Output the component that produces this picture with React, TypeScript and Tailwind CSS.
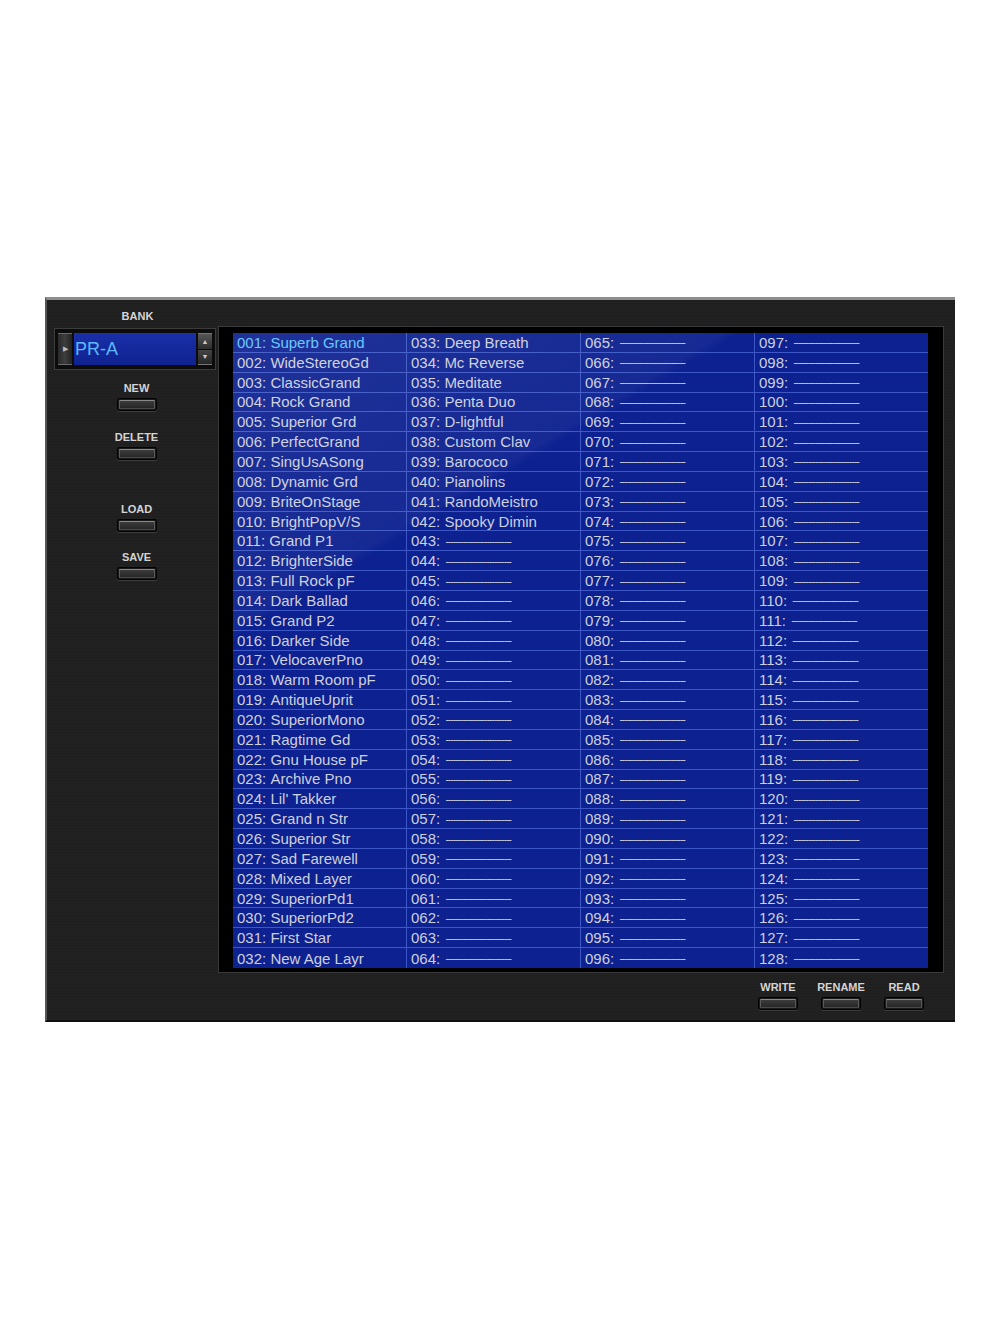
import React from "react";

const names: string[] = [
  "Superb Grand",
  "WideStereoGd",
  "ClassicGrand",
  "Rock Grand",
  "Superior Grd",
  "PerfectGrand",
  "SingUsASong",
  "Dynamic Grd",
  "BriteOnStage",
  "BrightPopV/S",
  "Grand P1",
  "BrighterSide",
  "Full Rock pF",
  "Dark Ballad",
  "Grand P2",
  "Darker Side",
  "VelocaverPno",
  "Warm Room pF",
  "AntiqueUprit",
  "SuperiorMono",
  "Ragtime Gd",
  "Gnu House pF",
  "Archive Pno",
  "Lil' Takker",
  "Grand n Str",
  "Superior Str",
  "Sad Farewell",
  "Mixed Layer",
  "SuperiorPd1",
  "SuperiorPd2",
  "First Star",
  "New Age Layr",
  "Deep Breath",
  "Mc Reverse",
  "Meditate",
  "Penta Duo",
  "D-lightful",
  "Custom Clav",
  "Barococo",
  "Pianolins",
  "RandoMeistro",
  "Spooky Dimin",
];

const EMPTY = "---------------------------";

function HwButton({ label }: { label: string }) {
  return (
    <div className="flex flex-col items-center w-[40px]">
      <p className="h-[12px] leading-[12px] text-[11px] font-bold text-[#d4d4d4] whitespace-nowrap">
        {label}
      </p>
      <div className="mt-[4px] w-[40px] h-[13px] rounded-[2px] border border-[#030303] bg-[#1a1a1a] p-[1px] shadow-[0_1px_0_#3c3c3c]">
        <div className="h-full rounded-[1px] border-t border-x border-t-[#8a8a8a] border-x-[#5a5a5a] border-b border-b-[#4a4a4a] bg-[linear-gradient(180deg,#3c3c3c,#262626)]" />
      </div>
    </div>
  );
}

function BankBox() {
  return (
    <div className="ml-[7px] mt-[6px] w-[162px] h-[42px] border border-[#3c3c3c] bg-[#0c0c0c] flex items-center px-[3px] gap-[2px]">
      <div className="w-[14px] h-[32px] bg-[linear-gradient(90deg,#2a2a2a,#3e3e3e,#222)] border-y border-[#6a6a6a] flex items-center justify-center">
        <span className="text-[7px] text-[#bbbbbb]">▶</span>
      </div>
      <div className="flex-1 h-[32px] bg-[linear-gradient(180deg,#1a2fa8,#0f2290)] flex items-center pl-[1px]">
        <span className="text-[18px] leading-none text-[#5cb8ff]">PR-A</span>
      </div>
      <div className="w-[14px] h-[32px] flex flex-col gap-[1px]">
        <div className="flex-1 bg-[linear-gradient(180deg,#555,#2e2e2e)] border-t border-[#777] flex items-center justify-center">
          <span className="text-[7px] leading-none text-[#cccccc]">▲</span>
        </div>
        <div className="flex-1 bg-[linear-gradient(180deg,#444,#262626)] border-b border-[#777] flex items-center justify-center">
          <span className="text-[7px] leading-none text-[#cccccc]">▼</span>
        </div>
      </div>
    </div>
  );
}

function PatchColumn({ col }: { col: number }) {
  const rows = Array.from({ length: 32 }, (_, i) => col * 32 + i);
  return (
    <div
      className={
        "grid grid-rows-[repeat(32,minmax(0,1fr))] h-full " +
        (col < 3 ? "border-r border-[#3d58c6]" : "")
      }
    >
      {rows.map((n) => {
        const num = String(n + 1).padStart(3, "0");
        const name = names[n];
        const selected = n === 0;
        return (
          <div
            key={n}
            className={
              "flex items-center pl-[4px] whitespace-nowrap overflow-hidden text-[15px] leading-none " +
              (n % 32 < 31 ? "border-b border-[#3d58c6] " : "") +
              (selected ? "text-[#5fc4ff]" : "text-[#cdd0de]")
            }
          >
            <span>{num}:&nbsp;</span>
            {name ? (
              <span>{name}</span>
            ) : (
              <span className="text-[10px] tracking-[-0.9px] ml-[1px] mt-[2px]">{EMPTY}</span>
            )}
          </div>
        );
      })}
    </div>
  );
}

export default function App() {
  return (
    <div
      className="w-full h-[1320px] bg-white pt-[297px] pl-[45px]"
      style={{ fontFamily: '"Liberation Sans", Arial, sans-serif' }}
    >
      <div className="w-[910px] h-[725px] flex border-t-[3px] border-t-[#8d8d8d] border-l-2 border-l-[#555] border-b-2 border-b-[#0e0e0e] bg-[repeating-linear-gradient(0deg,#1f1f1f_0px,#242424_1px,#1d1d1d_2px,#212121_3px)]">
        {/* left controls */}
        <div className="w-[171px] flex flex-col">
          <p className="mt-[10px] pl-[10px] text-center h-[12px] leading-[12px] text-[11px] font-bold text-[#d4d4d4]">
            BANK
          </p>
          <BankBox />
          <div className="pl-[8px] flex flex-col items-center">
            <div className="mt-[12px]">
              <HwButton label="NEW" />
            </div>
            <div className="mt-[20px]">
              <HwButton label="DELETE" />
            </div>
            <div className="mt-[43px]">
              <HwButton label="LOAD" />
            </div>
            <div className="mt-[19px]">
              <HwButton label="SAVE" />
            </div>
          </div>
        </div>

        {/* patch list */}
        <div className="w-[726px] flex flex-col">
          <div className="mt-[26px] h-[647px] border border-[#3a3a3a] bg-black pl-[14px] pt-[6px] pr-[15px] pb-[4px]">
            <div className="relative h-full bg-[#0d2190] grid grid-cols-[174px_174px_174px_1fr]">
              {[0, 1, 2, 3].map((c) => (
                <PatchColumn key={c} col={c} />
              ))}
              <div className="absolute inset-0 pointer-events-none bg-[linear-gradient(149deg,rgba(255,255,255,0.08)_0%,rgba(255,255,255,0.04)_28%,rgba(255,255,255,0)_29%)]" />
            </div>
          </div>
          <div className="mt-[8px] pr-[20px] flex justify-end gap-[23px]">
            <HwButton label="WRITE" />
            <HwButton label="RENAME" />
            <HwButton label="READ" />
          </div>
        </div>
      </div>
    </div>
  );
}
